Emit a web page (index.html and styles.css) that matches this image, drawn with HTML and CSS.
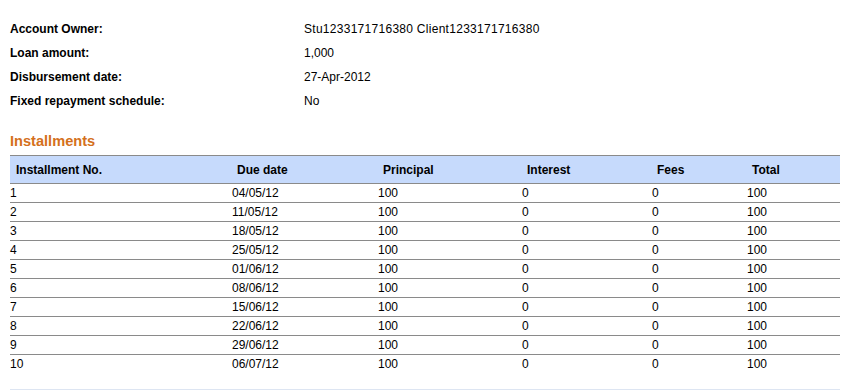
FILE: index.html
```html
<!DOCTYPE html>
<html>
<head>
<meta charset="utf-8">
<link rel="stylesheet" href="styles.css">
</head>
<body>
<div class="page">
  <div class="info">
    <div class="label">Account Owner:</div><div class="value owner">Stu1233171716380 Client1233171716380</div>
    <div class="label">Loan amount:</div><div class="value">1,000</div>
    <div class="label">Disbursement date:</div><div class="value">27-Apr-2012</div>
    <div class="label">Fixed repayment schedule:</div><div class="value">No</div>
  </div>
  <h2 class="heading">Installments</h2>
  <table class="schedule">
    <colgroup>
      <col class="c1"><col class="c2"><col class="c3"><col class="c4"><col class="c5"><col class="c6">
    </colgroup>
    <thead>
      <tr><th>Installment No.</th><th>Due date</th><th>Principal</th><th>Interest</th><th>Fees</th><th>Total</th></tr>
    </thead>
    <tbody>
      <tr><td>1</td><td>04/05/12</td><td>100</td><td>0</td><td>0</td><td>100</td></tr>
      <tr><td>2</td><td>11/05/12</td><td>100</td><td>0</td><td>0</td><td>100</td></tr>
      <tr><td>3</td><td>18/05/12</td><td>100</td><td>0</td><td>0</td><td>100</td></tr>
      <tr><td>4</td><td>25/05/12</td><td>100</td><td>0</td><td>0</td><td>100</td></tr>
      <tr><td>5</td><td>01/06/12</td><td>100</td><td>0</td><td>0</td><td>100</td></tr>
      <tr><td>6</td><td>08/06/12</td><td>100</td><td>0</td><td>0</td><td>100</td></tr>
      <tr><td>7</td><td>15/06/12</td><td>100</td><td>0</td><td>0</td><td>100</td></tr>
      <tr><td>8</td><td>22/06/12</td><td>100</td><td>0</td><td>0</td><td>100</td></tr>
      <tr><td>9</td><td>29/06/12</td><td>100</td><td>0</td><td>0</td><td>100</td></tr>
      <tr><td>10</td><td>06/07/12</td><td>100</td><td>0</td><td>0</td><td>100</td></tr>
    </tbody>
  </table>
  <div class="footer-line"></div>
</div>
</body>
</html>
```
FILE: styles.css
```css
html, body {
  margin: 0;
  padding: 0;
  background: #ffffff;
}
body {
  font-family: "Liberation Sans", Arial, sans-serif;
  font-size: 12px;
  color: #000;
}
.page {
  padding: 17px 18px 0 10px;
  width: 830px;
}
.info {
  display: grid;
  grid-template-columns: 294px 1fr;
  line-height: 24px;
}
.label {
  font-weight: bold;
}
.owner {
  letter-spacing: 0.28px;
}
.heading {
  margin: 18px 0 4px 0;
  font-size: 14.6px;
  line-height: 20px;
  font-weight: bold;
  color: #d4701c;
}
.schedule {
  width: 830px;
  border-collapse: collapse;
  table-layout: fixed;
}
.c1 { width: 222px; }
.c2 { width: 146px; }
.c3 { width: 144px; }
.c4 { width: 130px; }
.c5 { width: 95px; }
.c6 { width: 93px; }
.schedule th {
  background: #c6dafc;
  border-top: 1px solid #8a8a8a;
  border-bottom: 1px solid #8a8a8a;
  text-align: left;
  font-weight: bold;
  padding: 1px 0 0 5px;
  height: 26px;
  line-height: 26px;
}
.schedule th:first-child {
  padding-left: 6px;
}
.schedule td {
  padding: 0;
  height: 18px;
  line-height: 18px;
  border-bottom: 1px solid #8a8a8a;
}
.schedule tbody tr:last-child td {
  border-bottom: none;
}
.footer-line {
  margin-top: 16px;
  height: 1px;
  background: #dde5f2;
}
```
